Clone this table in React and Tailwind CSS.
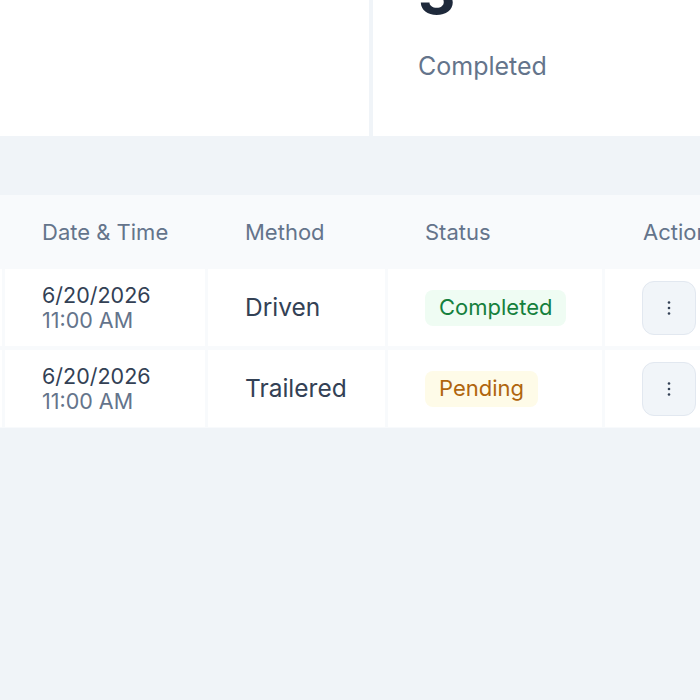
import React from 'react';

const rows = [
  { date: '6/20/2026', time: '11:00 AM', method: 'Driven', status: 'Completed' },
  { date: '6/20/2026', time: '11:00 AM', method: 'Trailered', status: 'Pending' },
];

function StatusBadge({ status }) {
  if (status === 'Completed') {
    return (
      <span className="inline-flex h-[36px] items-center rounded-[8px] bg-[#effcf3] px-[14px] text-[22px] text-[#15803d]">
        {status}
      </span>
    );
  }
  return (
    <span className="inline-flex h-[36px] items-center rounded-[8px] bg-[#fefbe8] px-[14px] text-[22px] text-[#b0650d]">
      {status}
    </span>
  );
}

function ActionButton() {
  return (
    <button className="flex h-[54px] w-[54px] shrink-0 items-center justify-center rounded-[12px] border-[1.5px] border-[#e2e8f0] bg-[#f1f5f9]">
      <svg width="4" height="16" viewBox="0 0 4 16" fill="#334155">
        <circle cx="2" cy="2.5" r="1.3" />
        <circle cx="2" cy="8" r="1.3" />
        <circle cx="2" cy="13.5" r="1.3" />
      </svg>
    </button>
  );
}

export default function App() {
  return (
    <div className="h-[700px] w-[700px] overflow-hidden bg-[#f0f4f8] font-['Inter',sans-serif]">
      {/* Stat cards, scrolled so only the bottom shows */}
      <div className="flex h-[136px] gap-[4px]">
        <div className="w-[369px] shrink-0 bg-white" />
        <div className="flex-1 bg-white pl-[45px]">
          <div className="-mt-[36px] text-[58px] font-bold leading-[58px] text-[#1e293b]">3</div>
          <div className="mt-[29px] text-[25px] leading-[30px] text-[#64748b]">Completed</div>
        </div>
      </div>

      {/* Inspections table */}
      <div className="mt-[59px] bg-[#f8fafc]">
        <div className="flex h-[74px] items-center text-[22px] text-[#64748b]">
          <div className="w-[5px] shrink-0" />
          <div className="w-[203px] shrink-0 pl-[37px]">Date &amp; Time</div>
          <div className="w-[180px] shrink-0 pl-[37px]">Method</div>
          <div className="w-[217px] shrink-0 pl-[37px]">Status</div>
          <div className="shrink-0 whitespace-nowrap pl-[38px]">Actions</div>
        </div>
        <div className="flex flex-col gap-[4px] pb-[1px]">
          {rows.map((r, i) => (
            <div key={i} className="flex h-[77px] gap-[3px]">
              <div className="w-[2px] shrink-0 bg-white" />
              <div className="flex w-[200px] shrink-0 flex-col justify-center bg-white pl-[37px] leading-[25px]">
                <span className="text-[21.5px] text-[#334155]">{r.date}</span>
                <span className="text-[21.5px] text-[#64748b]">{r.time}</span>
              </div>
              <div className="flex w-[177px] shrink-0 items-center bg-white pl-[37px] text-[24.5px] text-[#334155]">
                {r.method}
              </div>
              <div className="flex w-[214px] shrink-0 items-center bg-white pl-[37px]">
                <StatusBadge status={r.status} />
              </div>
              <div className="flex flex-1 items-center bg-white pl-[37px]">
                <ActionButton />
              </div>
            </div>
          ))}
        </div>
      </div>
    </div>
  );
}
